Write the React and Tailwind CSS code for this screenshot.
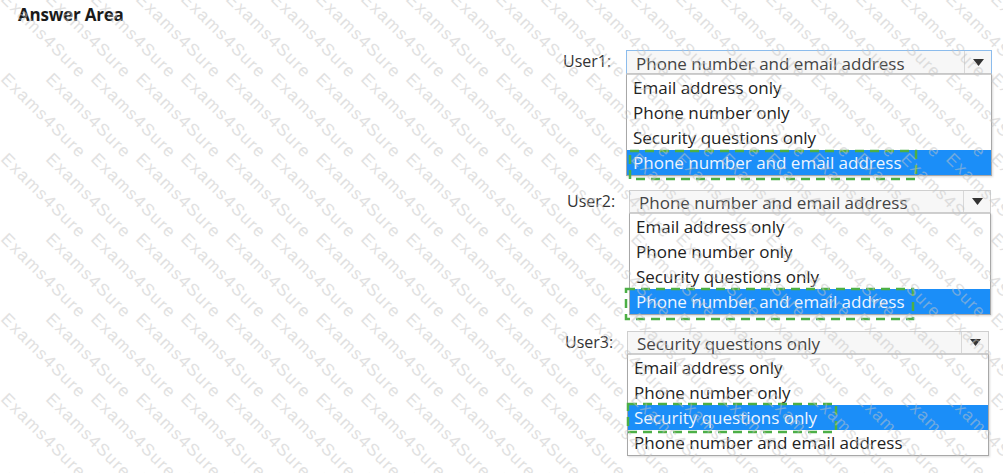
import React from "react";

const OPTIONS = [
  "Email address only",
  "Phone number only",
  "Security questions only",
  "Phone number and email address",
];

function Watermark() {
  const items = [];
  for (let r = 0; r < 8; r++) {
    for (let c = 0; c < 24; c++) {
      items.push(
        <span
          key={`${r}-${c}`}
          className="absolute whitespace-nowrap text-[17px] leading-none text-[#c4c4c4] opacity-50 origin-top-left rotate-45 tracking-[1.5px]"
          style={{ left: 10 + c * 45, top: -10 + r * 80 }}
        >
          Exams4Sure
        </span>
      );
    }
  }
  return (
    <div
      className="pointer-events-none absolute inset-0 overflow-hidden"
      style={{ fontFamily: '"Liberation Sans", Arial, sans-serif' }}
    >
      {items}
    </div>
  );
}

function DashBox({ dash }) {
  return (
    <svg
      className="absolute overflow-visible"
      style={{ left: dash.left, top: dash.top }}
      width={dash.width}
      height={dash.height}
    >
      <rect
        x="1"
        y="1"
        width={dash.width - 2}
        height={dash.height - 2}
        fill="none"
        stroke="#4caf46"
        strokeWidth="2.5"
        strokeDasharray="9 6"
      />
    </svg>
  );
}

function Dropdown({ label, labelW, boxW, value, selected, focused, selectH, dash }) {
  return (
    <div className="flex items-start">
      <div
        className="shrink-0 text-[16px] text-[#333] leading-none pt-[3px]"
        style={{ width: labelW }}
      >
        {label}
      </div>
      <div className="relative" style={{ width: boxW }}>
        <div
          className={`flex items-stretch border ${
            focused ? "border-[#8cbcec] border-b-[#c9c9c9]" : "border-[#cfcfcf]"
          } bg-[#f7f7f7]`}
          style={{ height: selectH }}
        >
          <div className="flex-1 flex items-center pl-[9px] text-[17px] text-[#444] leading-none pt-[2px]">
            {value}
          </div>
          <div className="w-[27px] border-l border-[#d8d8d8] flex items-center justify-center">
            <svg width="11" height="7" viewBox="0 0 11 7">
              <path d="M0 0 H11 L5.5 7 Z" fill="#333" />
            </svg>
          </div>
        </div>
        <div className="border border-[#a8a8a8] border-t-[#cfcfcf] bg-white shadow-[1px_1px_2px_rgba(0,0,0,0.15)]">
          {OPTIONS.map((o) => (
            <div
              key={o}
              className={`h-[25px] flex items-center pl-[6px] text-[17px] leading-none ${
                o === selected ? "bg-[#1b8ef8] text-[#eef5ff]" : "text-[#222]"
              }`}
            >
              {o}
            </div>
          ))}
        </div>
        <DashBox dash={dash} />
      </div>
    </div>
  );
}

export default function App() {
  return (
    <div
      className="relative w-[1003px] h-[473px] bg-white overflow-hidden"
      style={{ fontFamily: '"Open Sans", "Noto Sans", sans-serif' }}
    >
      <div className="px-[18px] pt-[4px] text-[17px] font-bold text-[#1a1a1a] leading-[22px] tracking-[-0.2px]">
        Answer Area
      </div>
      <div className="flex flex-col pl-[563px] pt-[24px]">
        <Dropdown
          label="User1:"
          labelW={63}
          boxW={366}
          value="Phone number and email address"
          selected="Phone number and email address"
          focused
          selectH={24}
          dash={{ left: 3, top: 100, width: 288, height: 30 }}
        />
        <div className="h-[14px]" />
        <div className="pl-[4px]">
          <Dropdown
            label="User2:"
            labelW={62}
            boxW={362}
            value="Phone number and email address"
            selected="Phone number and email address"
            selectH={23}
            dash={{ left: -4, top: 98, width: 289, height: 32 }}
          />
        </div>
        <div className="h-[16px]" />
        <div className="pl-[2px]">
          <Dropdown
            label="User3:"
            labelW={62}
            boxW={362}
            value="Security questions only"
            selected="Security questions only"
            selectH={23}
            dash={{ left: 0, top: 72, width: 210, height: 30 }}
          />
        </div>
      </div>
      <Watermark />
    </div>
  );
}
